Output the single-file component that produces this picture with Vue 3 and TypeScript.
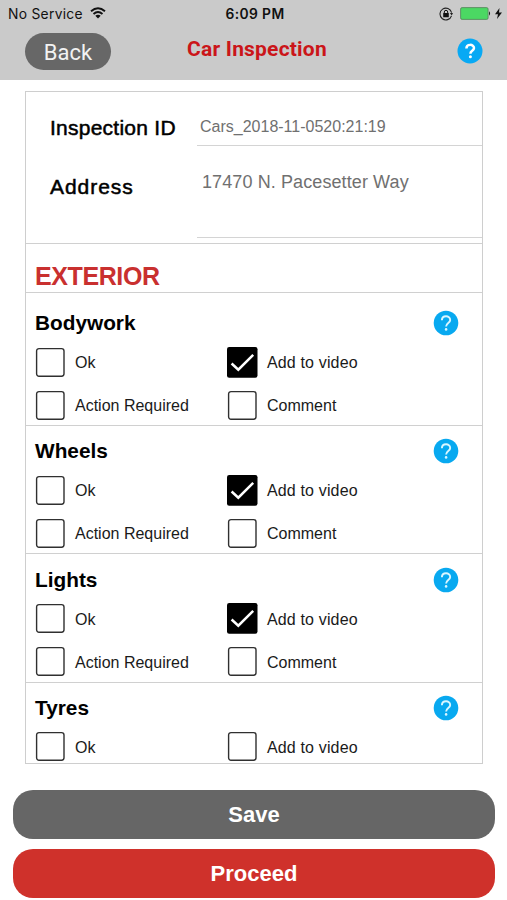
<script setup lang="ts">
interface Option {
  label: string
  kind: string
  checked: boolean
}
interface Item {
  name: string
  options: Option[]
}

const firstRow = (video: boolean): Option[] => [
  { label: 'Ok', kind: 'ok', checked: false },
  { label: 'Add to video', kind: 'video', checked: video },
]
const secondRow = (): Option[] => [
  { label: 'Action Required', kind: 'action', checked: false },
  { label: 'Comment', kind: 'comment', checked: false },
]

const items: Item[] = [
  { name: 'Bodywork', options: [...firstRow(true), ...secondRow()] },
  { name: 'Wheels', options: [...firstRow(true), ...secondRow()] },
  { name: 'Lights', options: [...firstRow(true), ...secondRow()] },
  { name: 'Tyres', options: firstRow(false) },
]
</script>

<template>
  <div class="screen">
    <header class="top">
      <div class="status">
        <div class="carrier">
          <span class="carrier-name">No Service</span>
          <svg class="wifi" viewBox="0 0 16 12" width="16" height="12">
            <g fill="none" stroke="#111" stroke-width="1.9">
              <path d="M1 4.3Q8 -1.7 15 4.3" />
              <path d="M3.5 7Q8 3.2 12.500 7" />
            </g>
            <path d="M5.300 8.800Q8 6.800 10.700 8.800L8 11.600Z" fill="#111" />
          </svg>
        </div>
        <span class="clock">6:09 PM</span>
        <div class="power">
          <svg viewBox="0 0 14 14" width="14" height="14">
            <path d="M12.600 5.600A5.900 5.900 0 1 0 12.500 8.800" fill="none" stroke="#222" stroke-width="1.1" />
            <path d="M10.900 6.100H14L12.700 8.500Z" fill="#222" />
            <rect x="4.200" y="6.100" width="5.600" height="4.200" rx=".5" fill="#111" />
            <path d="M5.300 6.300V5a1.700 1.700 0 0 1 3.400 0v1.300" fill="none" stroke="#111" stroke-width="1" />
          </svg>
          <svg class="battery" viewBox="0 0 32 13" width="32" height="13">
            <rect x=".6" y=".6" width="27.500" height="11.800" rx="1.500" fill="#4bd863" stroke="#55805b" stroke-width=".8" />
            <path d="M29 4.300q2.200 2.200 0 4.400z" fill="#222" />
          </svg>
          <svg class="bolt" viewBox="0 0 7 11" width="7" height="11">
            <path d="M4.500 0L0 6.200H3L2 11L7 4.500H4Z" fill="#111" />
          </svg>
        </div>
      </div>
      <div class="nav">
        <button class="back"><span>Back</span></button>
        <h1>Car Inspection</h1>
        <svg class="help" viewBox="0 0 26 26" width="26" height="26">
          <circle cx="13" cy="13" r="12.500" fill="#08a9f4" />
          <path d="M9.400 10.400C9.400 5.700 17 5.800 17 10.100C17 12.900 13.400 12.800 13.400 15.700" fill="none" stroke="#fff" stroke-width="2.500" />
          <circle cx="13.400" cy="18.700" r="1.500" fill="#fff" />
        </svg>
      </div>
    </header>

    <main class="card">
      <div class="field id-field">
        <label><span class="t-id">Inspection ID</span></label>
        <div class="value"><span class="v-id">Cars_2018-11-0520:21:19</span></div>
      </div>
      <div class="field address-field">
        <label><span class="t-address">Address</span></label>
        <div class="value"><span class="v-address">17470 N. Pacesetter Way</span></div>
      </div>
      <h2><span>EXTERIOR</span></h2>
      <section v-for="item in items" :key="item.name" class="item">
        <div class="item-head">
          <h3>{{ item.name }}</h3>
          <svg viewBox="0 0 26 26" width="26" height="26">
            <circle cx="13" cy="13" r="12.300" fill="#08a9f0" />
            <path d="M8.900 10.300C8.900 4.900 17.200 5 17.200 9.900C17.200 13 13.100 13 13.100 16.500" fill="none" stroke="#d9f6ff" stroke-width="1.900" />
            <circle cx="13.100" cy="19.400" r="1.300" fill="#d9f6ff" />
          </svg>
        </div>
        <div class="options">
          <div v-for="o in item.options" :key="o.kind" class="option">
            <svg viewBox="0 0 31 31" width="31" height="31">
              <template v-if="o.checked">
                <rect x="0" y="0" width="30.500" height="30.800" rx="2.200" fill="#000" />
                <path d="M4.600 16.500L11.300 22.700L26.200 7.900" fill="none" stroke="#fff" stroke-width="2.500" />
              </template>
              <rect v-else x="1.600" y="1.600" width="27.400" height="27.600" rx="2.400" fill="#fff" stroke="#303030" stroke-width="1.400" />
            </svg>
            <span :class="['option-label', o.kind]">{{ o.label }}</span>
          </div>
        </div>
      </section>
    </main>

    <footer class="actions">
      <button class="save"><span>Save</span></button>
      <button class="proceed"><span>Proceed</span></button>
    </footer>
  </div>
</template>

<style>
body {
  margin: 0;
  background: #fff;
}
</style>

<style scoped>
.screen {
  width: 507px;
  height: 900px;
  overflow: hidden;
  background: #fff;
  color: #000;
  font-family: "Liberation Sans", Arial, sans-serif;
  display: flex;
  flex-direction: column;
}
.screen * {
  box-sizing: border-box;
}
span,
h1,
h3 {
  white-space: nowrap;
}
h1,
h2,
h3 {
  margin: 0;
}
button {
  border: 0;
  padding: 0;
  font-family: inherit;
}
svg {
  display: block;
  flex: none;
}
.top {
  height: 79.500px;
  flex: none;
  background: #cacaca;
}
.status {
  height: 27px;
  display: grid;
  grid-template-columns: 1fr auto 1fr;
  align-items: center;
  padding: 0 5px 0 8px;
  font-family: Inter, sans-serif;
  color: #111;
}
.carrier,
.power {
  display: flex;
  align-items: center;
}
.carrier {
  gap: 7px;
}
.carrier-name {
  font-size: 13.800px;
  letter-spacing: .3px;
}
.wifi {
  margin-top: -2px;
}
.clock {
  font-size: 13.800px;
  font-weight: 600;
  letter-spacing: .4px;
}
.power {
  justify-content: flex-end;
}
.battery {
  margin-left: 7px;
}
.bolt {
  margin-left: 3px;
}
.nav {
  height: 52px;
  display: grid;
  grid-template-columns: 86px 1fr 86px;
  padding: 0 24px 0 25px;
}
.back {
  width: 86px;
  height: 37px;
  margin-top: 6px;
  padding-top: 1px;
  border-radius: 19px;
  background: #676767;
  color: #f2f2f2;
  font-family: Roboto, sans-serif;
  font-size: 22px;
}
.nav h1 {
  justify-self: center;
  margin-top: 8px;
  margin-left: 6px;
  font: 700 21px/28px Roboto, sans-serif;
  letter-spacing: .2px;
  color: #cb1519;
}
.nav .help {
  justify-self: end;
  margin-top: 11px;
}
.card {
  flex: none;
  width: 458px;
  height: 673px;
  margin: 11.500px 0 0 25px;
  border: 1px solid #cecece;
  overflow: hidden;
}
.field {
  display: grid;
  grid-template-columns: 171px 1fr;
}
.field label {
  padding-left: 24px;
  font-size: 21px;
  line-height: 24px;
  letter-spacing: .25px;
  -webkit-text-stroke: .5px #000;
}
.field .t-address {
  letter-spacing: .95px;
}
.field .value {
  border-bottom: 1px solid #d4d4d4;
  color: #707070;
}
.id-field {
  height: 54px;
}
.id-field label {
  padding-top: 24px;
}
.id-field .value {
  padding: 25px 0 0 3px;
  font-size: 16px;
  line-height: 20px;
}
.address-field {
  height: 98px;
  padding-bottom: 5px;
  border-bottom: 1px solid #d0d0d0;
}
.address-field label {
  padding-top: 29px;
}
.address-field .value {
  padding: 25px 0 0 5px;
  font-size: 18px;
  line-height: 22px;
  letter-spacing: .1px;
}
h2 {
  height: 48.500px;
  padding: 18px 0 0 9px;
  border-bottom: 1px solid #d0d0d0;
  color: #c9302f;
  font-size: 25px;
  line-height: 28px;
  letter-spacing: -.4px;
}
.item {
  padding: 12.800px 23px 4.500px 9px;
  border-bottom: 1px solid #d0d0d0;
}
h2 + .item {
  padding-top: 18px;
}
.item-head {
  height: 25px;
  display: flex;
  align-items: center;
  justify-content: space-between;
}
h3 {
  font-size: 20.800px;
  line-height: 24px;
}
.options {
  margin-top: 11px;
  display: grid;
  grid-template-columns: 192px 1fr;
  row-gap: 12px;
}
.option {
  height: 31px;
  display: flex;
  align-items: center;
  gap: 9px;
}
.option-label {
  padding-top: 2px;
  font-size: 16px;
  color: #1a1a1a;
}
.option-label.video {
  letter-spacing: .15px;
}
.actions {
  margin-top: 26px;
  padding: 0 12px 0 13px;
  display: flex;
  flex-direction: column;
  gap: 10px;
}
.actions button {
  height: 49px;
  padding-top: 1px;
  border-radius: 20px;
  color: #fff;
  font-size: 22px;
  font-weight: 700;
}
.save {
  background: #666;
}
.proceed {
  background: #cf312b;
}
</style>
